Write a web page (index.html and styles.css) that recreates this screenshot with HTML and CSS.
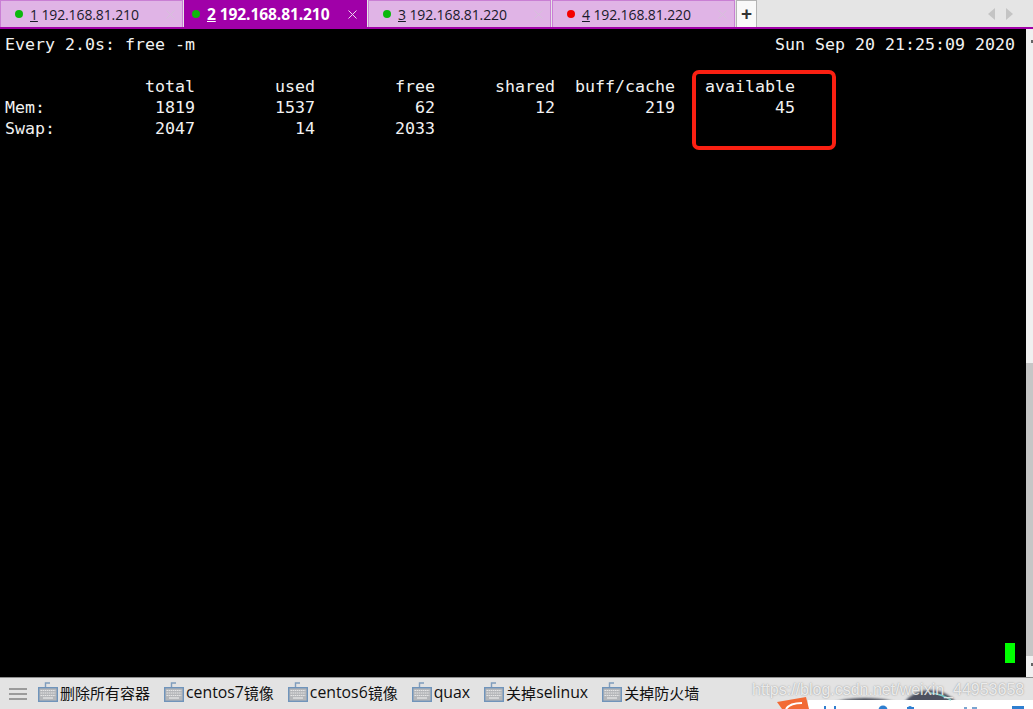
FILE: index.html
```html
<!DOCTYPE html>
<html lang="en">
<head>
<meta charset="utf-8">
<title>Terminal</title>
<link rel="stylesheet" href="styles.css">
</head>
<body>
<svg class="defs" width="0" height="0" aria-hidden="true">
  <symbol id="kbd" viewBox="0 0 20 20">
    <path d="M7.500 6V1H12" fill="none" stroke="#7f9dbd" stroke-width="1.4"/>
    <rect x="0.7" y="5.7" width="18.6" height="13.6" fill="#b4b6b9" stroke="#6f94bb" stroke-width="1.4"/>
    <path d="M2.500 8.500H17.500M2.500 11H17.500M2.500 13.500H17.500" stroke="#e6e6e6" stroke-width="1" stroke-dasharray="1.5 .6"/>
    <path d="M5 16H15" stroke="#e6e6e6" stroke-width="1.3"/>
  </symbol>
  <symbol id="x" viewBox="0 0 9 9">
    <path d="M.5 .5L8.500 8.500M8.500 .5L.5 8.500" fill="none" stroke="currentColor" stroke-width="1"/>
  </symbol>
</svg>
<div class="app">
  <header class="tabbar">
    <div class="tab"><span class="dot green"></span><span class="label"><u>1</u> 192.168.81.210</span><svg class="close"><use href="#x"/></svg></div>
    <div class="tab active"><span class="dot green"></span><span class="label"><u>2</u> 192.168.81.210</span><svg class="close"><use href="#x"/></svg></div>
    <div class="tab"><span class="dot green"></span><span class="label"><u>3</u> 192.168.81.220</span><svg class="close"><use href="#x"/></svg></div>
    <div class="tab"><span class="dot red"></span><span class="label"><u>4</u> 192.168.81.220</span><svg class="close"><use href="#x"/></svg></div>
    <div class="add">+</div>
    <div class="arrows">
      <svg width="25" height="12" viewBox="0 0 25 12"><path d="M7 0V12L0 6Z" fill="#c4c4c4"/><path d="M18 0V12L25 6Z" fill="#c4c4c4"/></svg>
    </div>
  </header>
  <main class="body">
    <section class="terminal">
<pre class="screen">Every 2.0s: free -m                                                          Sun Sep 20 21:25:09 2020

              total        used        free      shared  buff/cache   available
Mem:           1819        1537          62          12         219          45
Swap:          2047          14        2033</pre>
      <div class="highlight"></div>
      <div class="cursor"></div>
    </section>
    <aside class="scrollbar">
      <div class="arrow-up"></div>
      <div class="thumb"></div>
      <div class="arrow-down"></div>
    </aside>
  </main>
  <footer class="quickbar">
    <div class="menu"><span></span><span></span><span></span></div>
    <div class="cmd"><svg class="key"><use href="#kbd"/></svg>删除所有容器</div>
    <div class="cmd"><svg class="key"><use href="#kbd"/></svg><span class="lat">centos7</span>镜像</div>
    <div class="cmd"><svg class="key"><use href="#kbd"/></svg><span class="lat">centos6</span>镜像</div>
    <div class="cmd"><svg class="key"><use href="#kbd"/></svg><span class="lat">quax</span></div>
    <div class="cmd"><svg class="key"><use href="#kbd"/></svg>关掉<span class="lat">selinux</span></div>
    <div class="cmd"><svg class="key"><use href="#kbd"/></svg>关掉防火墙</div>
    <svg class="page-peek" width="273" height="34" viewBox="0 0 273 34" aria-hidden="true">
      <defs><filter id="soft"><feGaussianBlur stdDeviation="1"/></filter></defs>
      <ellipse cx="105" cy="32" rx="36" ry="9" fill="#4a4d58" filter="url(#soft)"/>
      <ellipse cx="170" cy="42" rx="31" ry="27" fill="#4d5160" filter="url(#soft)"/>
      <rect x="48" y="25" width="225" height="9" fill="#fff"/>
      <path d="M170 18Q182 19 191 25" fill="none" stroke="#7fd6cf" stroke-width="1.6"/>
      <path d="M17 27L46 22L49 34H22Z" fill="#f26a35"/>
      <path d="M26 34Q30 28 42 28" fill="none" stroke="#fff" stroke-width="2"/>
      <g fill="#2e7fd0">
        <rect x="64" y="31" width="2" height="3"/>
        <rect x="74" y="31" width="2" height="3"/>
        <circle cx="123" cy="35" r="4.500"/>
        <circle cx="150" cy="33" r="2"/>
        <rect x="147" y="32" width="7" height="2"/>
        <rect x="204" y="32" width="3" height="2" fill="#7aa6d2"/>
        <rect x="212" y="32" width="5" height="2" fill="#7aa6d2"/>
        <rect x="252" y="31" width="12" height="3"/>
      </g>
    </svg>
    <div class="watermark">https://blog.csdn.net/weixin_44953658</div>
  </footer>
</div>
</body>
</html>
```
FILE: styles.css
```css
* { box-sizing: border-box; }
html, body { margin: 0; height: 100%; overflow: hidden; }
.defs { position: absolute; }
.app { width: 1033px; height: 709px; display: flex; flex-direction: column; }

.tabbar {
  height: 29px;
  flex: none;
  display: flex;
  align-items: stretch;
  background: #e5e5e5;
  border-bottom: 2px solid #a000a8;
  padding-right: 20px;
  font-family: "Open Sans", "Liberation Sans", sans-serif;
  font-size: 14px;
}
.tab {
  width: 183px;
  margin-right: 1px;
  display: flex;
  align-items: center;
  padding-left: 14px;
  background: #e0b4e6;
  border: 1px solid #c97fd4;
  border-bottom: 0;
  color: #1a1a2a;
}
.tab.active {
  padding-left: 7px;
  background: #a000a8;
  border-color: #a000a8;
  color: #fff;
  font-size: 15.6px;
  font-weight: 700;
}
.dot { width: 8px; height: 8px; border-radius: 50%; margin-right: 7px; flex: none; }
.green { background: #0cb80c; }
.red { background: #f40000; }
.label { white-space: nowrap; letter-spacing: -0.12px; }
.close {
  width: 9px;
  height: 9px;
  margin-left: auto;
  margin-right: 7px;
  color: #d6c0da;
}
.active .close { margin-right: 9px; color: #efd6f0; }
.add {
  width: 21px;
  background: #f9f9f9;
  border: 1px solid #b4b4b4;
  border-bottom: 0;
  display: flex;
  align-items: center;
  justify-content: center;
  color: #333;
  font-family: "Liberation Sans", sans-serif;
  font-size: 19px;
  font-weight: 700;
}
.arrows { margin-left: auto; display: flex; align-items: center; }

.body { flex: 1; display: flex; min-height: 0; }
.terminal { flex: 1; background: #000; position: relative; padding: 5px 0 0 5px; }
.screen {
  margin: 0;
  font-family: "DejaVu Sans Mono", "Liberation Mono", monospace;
  font-size: 16.61px;
  line-height: 21px;
  color: #f2f2f2;
}
.highlight {
  position: absolute;
  left: 692px;
  top: 41px;
  width: 144px;
  height: 80px;
  border: 4px solid #fb2012;
  border-radius: 7px;
}
.cursor {
  position: absolute;
  left: 1005px;
  top: 614px;
  width: 10px;
  height: 20px;
  background: #00ff00;
}
.scrollbar { width: 7px; flex: none; background: #f0f0f0; padding-top: 11px; display: flex; flex-direction: column; }
.arrow-up { width: 2px; height: 3px; margin: 0 0 320px 5px; background: #666; }
.thumb { height: 293px; background: #c6c6c6; }
.arrow-down { width: 2px; height: 3px; margin: 7px 0 0 5px; background: #666; }

.quickbar {
  height: 32px;
  flex: none;
  display: flex;
  align-items: center;
  background: #e3e3e3;
  border-top: 1px solid #8f8f8f;
  padding: 0 0 3px 9px;
  position: relative;
  overflow: hidden;
  font-family: "Noto Sans CJK SC", "Open Sans", sans-serif;
  font-size: 15px;
  color: #101010;
}
.lat { font-family: "Open Sans", sans-serif; font-size: 15.8px; }
.menu { width: 18px; margin: 3px 11px 0 0; display: flex; flex-direction: column; gap: 3px; }
.menu span { height: 2px; background: #9b9b9b; }
.cmd { display: flex; align-items: center; margin-right: 14px; white-space: nowrap; }
.key { width: 20px; height: 20px; margin-right: 2px; flex: none; }
.page-peek { position: absolute; right: 0; bottom: 0; }
.watermark {
  position: absolute;
  left: 752px;
  top: 1px;
  font-family: "Liberation Sans", sans-serif;
  font-size: 16px;
  line-height: 22px;
  color: rgba(255, 255, 255, .8);
  text-shadow: 0 0 1.5px rgba(110, 110, 110, .8);
  white-space: nowrap;
}
```
